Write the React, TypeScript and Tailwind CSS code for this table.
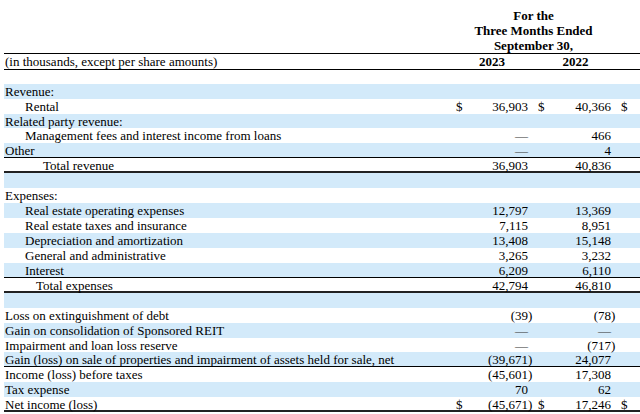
import React from "react";

type Row = {
  label: string;
  indent?: number;
  blue?: boolean;
  d1?: boolean;
  a?: string;
  ap?: boolean;
  d2?: boolean;
  b?: string;
  bp?: boolean;
  d3?: boolean;
  border?: "thin" | "thick";
  short?: boolean;
};

const rows: Row[] = [
  { label: "Revenue:", blue: true },
  { label: "Rental", indent: 20, d1: true, a: "36,903", d2: true, b: "40,366", d3: true },
  { label: "Related party revenue:", blue: true, short: true },
  { label: "Management fees and interest income from loans", indent: 20, a: "—", b: "466" },
  { label: "Other", blue: true, a: "—", b: "4", border: "thin" },
  { label: "Total revenue", indent: 38, a: "36,903", b: "40,836", border: "thick" },
  { label: "", blue: true },
  { label: "Expenses:" },
  { label: "Real estate operating expenses", indent: 20, blue: true, a: "12,797", b: "13,369" },
  { label: "Real estate taxes and insurance", indent: 20, a: "7,115", b: "8,951" },
  { label: "Depreciation and amortization", indent: 20, blue: true, a: "13,408", b: "15,148" },
  { label: "General and administrative", indent: 20, a: "3,265", b: "3,232" },
  { label: "Interest", indent: 20, blue: true, a: "6,209", b: "6,110", border: "thin" },
  { label: "Total expenses", indent: 31, a: "42,794", b: "46,810", border: "thick" },
  { label: "", blue: true },
  { label: "Loss on extinguishment of debt", a: "(39", ap: true, b: "(78", bp: true },
  { label: "Gain on consolidation of Sponsored REIT", blue: true, a: "—", b: "—" },
  { label: "Impairment and loan loss reserve", a: "—", b: "(717", bp: true, short: true },
  { label: "Gain (loss) on sale of properties and impairment of assets held for sale, net", blue: true, a: "(39,671", ap: true, b: "24,077", border: "thin" },
  { label: "Income (loss) before taxes", a: "(45,601", ap: true, b: "17,308" },
  { label: "Tax expense", blue: true, a: "70", b: "62" },
  { label: "Net income (loss)", d1: true, a: "(45,671", ap: true, d2: true, b: "17,246", d3: true, border: "thick" },
];

const grid = "grid grid-cols-[450px_20px_54px_10px_16px_57px_10px_23px]";

function Cell({ v }: { v?: string }) {
  if (v === "—") {
    return <div className="text-right text-[#333]">—</div>;
  }
  return <div className="text-right">{v}</div>;
}

export default function App() {
  return (
    <div
      className="w-[640px] h-[414px] overflow-hidden bg-white text-black text-[13px] leading-[15px]"
      style={{ fontFamily: '"Liberation Serif", "Times New Roman", serif' }}
    >
      <div className="h-[8px]" />
      <div className={grid}>
        <div />
        <div className="col-span-6 text-center font-bold">
          <div>For the</div>
          <div>Three Months Ended</div>
          <div>September 30,</div>
        </div>
        <div />
      </div>
      <div className="ml-[4px] border-t border-black" />
      <div className={grid + " h-[15px] items-center"}>
        <div className="pl-[5px]">(in thousands, except per share amounts)</div>
        <div className="col-span-3 text-center font-bold">2023</div>
        <div className="col-span-3 text-center font-bold">2022</div>
        <div />
      </div>
      <div className="ml-[4px] border-t border-black" />
      <div className="h-[14px]" />
      {rows.map((r, i) => {
        const borderCls =
          r.border === "thin"
            ? " border-b border-black"
            : r.border === "thick"
            ? " border-b-2 border-[#222]"
            : "";
        return (
          <div
            key={i}
            className={
              grid +
              (r.short ? " h-[14px]" : " h-[15px]") +
              " items-center ml-[4px]" +
              (r.blue ? " bg-[#d3eafa]" : "") +
              borderCls
            }
          >
            <div className="whitespace-nowrap" style={{ paddingLeft: (r.indent ?? 0) + 1 }}>
              {r.label}
            </div>
            <div className="pl-[2px]">{r.d1 ? "$" : ""}</div>
            <Cell v={r.a} />
            <div>{r.ap ? ")" : ""}</div>
            <div>{r.d2 ? "$" : ""}</div>
            <Cell v={r.b} />
            <div>{r.bp ? ")" : ""}</div>
            <div>{r.d3 ? "$" : ""}</div>
          </div>
        );
      })}
    </div>
  );
}
